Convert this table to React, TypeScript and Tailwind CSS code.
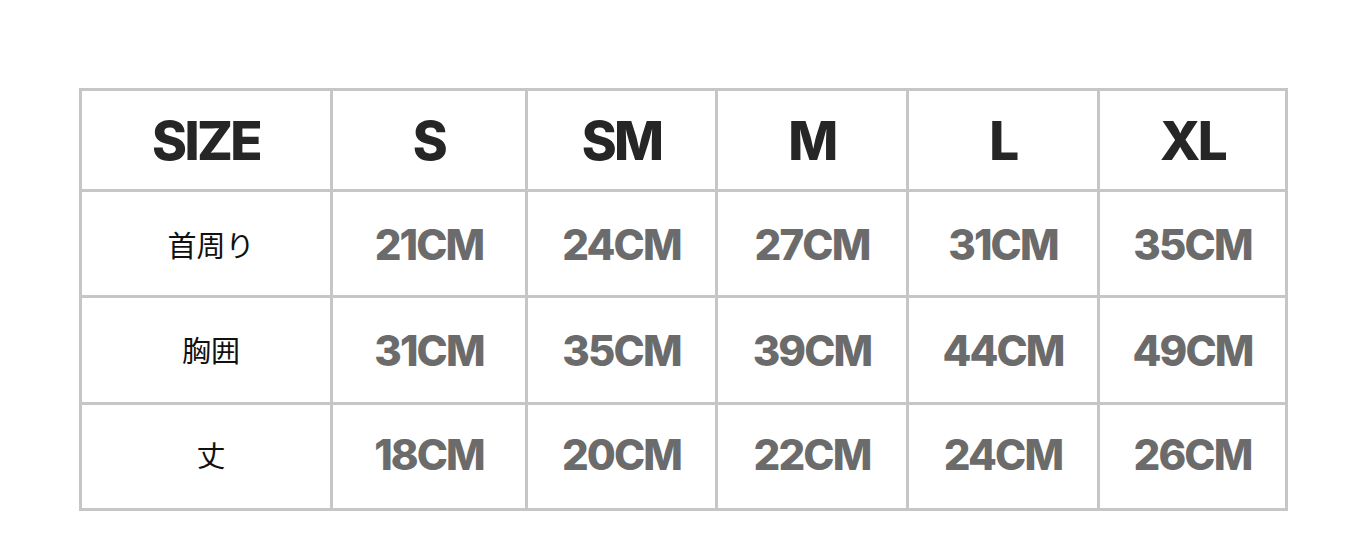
import React from 'react'

const sizes = ['S', 'SM', 'M', 'L', 'XL']

const rows: { label: string; values: string[] }[] = [
  { label: '首周り', values: ['21CM', '24CM', '27CM', '31CM', '35CM'] },
  { label: '胸囲', values: ['31CM', '35CM', '39CM', '44CM', '49CM'] },
  { label: '丈', values: ['18CM', '20CM', '22CM', '24CM', '26CM'] },
]

const heights = ['h-[103px] pt-[2px]', 'h-[104px]', 'h-[103px] pb-[4px]']

export default function App() {
  return (
    <div className="w-[1354px] h-[554px] bg-white pt-[88px] pl-[79px]">
      <div className="w-[1209px] grid grid-cols-[248px_192px_187px_188px_188px_185px] gap-[3px] p-[3px] bg-[#c6c6c6]">
        <div className="h-[98px] bg-white flex items-center justify-center pt-[4px] font-['Inter',sans-serif] font-extrabold text-[53px] tracking-[-0.05em] text-[#262626]">
          SIZE
        </div>
        {sizes.map((s) => (
          <div
            key={s}
            className="h-[98px] bg-white flex items-center justify-center pt-[4px] font-['Inter',sans-serif] font-extrabold text-[53px] tracking-[-0.05em] text-[#262626]"
          >
            {s}
          </div>
        ))}
        {rows.map((row, i) => (
          <React.Fragment key={row.label}>
            <div
              className={`${heights[i]} bg-white flex items-center justify-center pl-[10px] font-['Noto_Sans_CJK_JP',sans-serif] text-[29px] text-[#111]`}
            >
              {row.label}
            </div>
            {row.values.map((v, j) => (
              <div
                key={j}
                className={`${heights[i]} bg-white flex items-center justify-center font-['Inter',sans-serif] font-extrabold text-[42px] tracking-[-0.045em] text-[#6b6b6b]`}
              >
                {v}
              </div>
            ))}
          </React.Fragment>
        ))}
      </div>
    </div>
  )
}
